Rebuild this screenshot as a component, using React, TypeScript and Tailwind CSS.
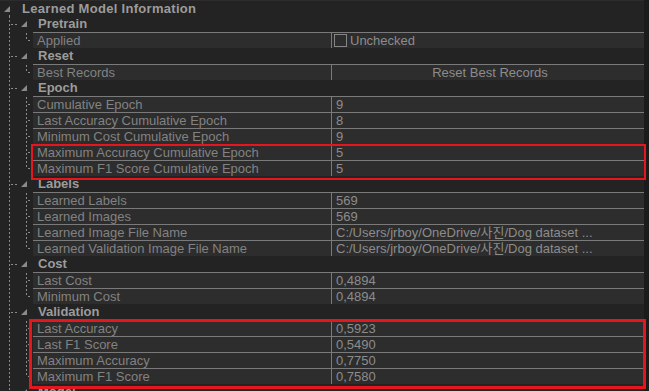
import type { ReactNode } from "react";

type Item = { label: string; value: ReactNode };
type Section = { title: string; items: Item[] };

const FONT = { fontFamily: '"Liberation Sans", "Noto Sans CJK KR", sans-serif' };

function Checkbox() {
  return (
    <span className="flex items-center gap-[3px]">
      <span className="ml-[-2px] h-[13px] w-[13px] border border-[#858585]" />
      <span>Unchecked</span>
    </span>
  );
}

const SECTIONS: Section[] = [
  { title: "Pretrain", items: [{ label: "Applied", value: <Checkbox /> }] },
  {
    title: "Reset",
    items: [
      {
        label: "Best Records",
        value: <span className="block w-full text-center">Reset Best Records</span>,
      },
    ],
  },
  {
    title: "Epoch",
    items: [
      { label: "Cumulative Epoch", value: "9" },
      { label: "Last Accuracy Cumulative Epoch", value: "8" },
      { label: "Minimum Cost Cumulative Epoch", value: "9" },
      { label: "Maximum Accuracy Cumulative Epoch", value: "5" },
      { label: "Maximum F1 Score Cumulative Epoch", value: "5" },
    ],
  },
  {
    title: "Labels",
    items: [
      { label: "Learned Labels", value: "569" },
      { label: "Learned Images", value: "569" },
      { label: "Learned Image File Name", value: "C:/Users/jrboy/OneDrive/사진/Dog dataset ..." },
      {
        label: "Learned Validation Image File Name",
        value: "C:/Users/jrboy/OneDrive/사진/Dog dataset ...",
      },
    ],
  },
  {
    title: "Cost",
    items: [
      { label: "Last Cost", value: "0,4894" },
      { label: "Minimum Cost", value: "0,4894" },
    ],
  },
  {
    title: "Validation",
    items: [
      { label: "Last Accuracy", value: "0,5923" },
      { label: "Last F1 Score", value: "0,5490" },
      { label: "Maximum Accuracy", value: "0,7750" },
      { label: "Maximum F1 Score", value: "0,7580" },
    ],
  },
  { title: "Model", items: [] },
];

// tree connector drawn in the 33px left gutter of each row
function Gutter({ kind, last }: { kind: "top" | "header" | "item"; last?: boolean }) {
  const c = "#8a8a8a";
  return (
    <svg width="33" height="16" className="shrink-0">
      {kind === "top" ? (
        <>
          <polygon points="10,5 10,11 4,11" fill={c} />
          <line x1="9.5" y1="14" x2="9.5" y2="16" stroke={c} strokeDasharray="2 2" />
        </>
      ) : (
        <line x1="9.5" y1="0" x2="9.5" y2="16" stroke={c} strokeDasharray="2 2" />
      )}
      {kind === "header" && (
        <>
          <line x1="11" y1="8.5" x2="17" y2="8.5" stroke={c} strokeDasharray="2 2" />
          <polygon points="27,5 27,11 21,11" fill={c} />
        </>
      )}
      {kind === "item" && (
        <>
          <line x1="26.5" y1="1" x2="26.5" y2={last ? 9 : 16} stroke={c} strokeDasharray="2 2" />
          <line x1="28" y1="8.5" x2="32" y2="8.5" stroke={c} strokeDasharray="2 2" />
        </>
      )}
    </svg>
  );
}

function ItemRow({ item, last }: { item: Item; last: boolean }) {
  return (
    <div className="flex h-4">
      <Gutter kind="item" last={last} />
      <div className="flex flex-1 border-t border-[#7a7a7a] bg-[#2d2d2d] text-[13px] leading-[15px]">
        <div className="w-[298px] shrink-0 overflow-hidden whitespace-nowrap pl-1 text-[#828282]">
          {item.label}
        </div>
        <div className="flex flex-1 overflow-hidden whitespace-nowrap border-l border-[#7a7a7a] pl-1 text-[#8c8c8c]">
          {item.value}
        </div>
      </div>
    </div>
  );
}

export default function App() {
  return (
    <div className="relative flex h-[391px] w-[649px] overflow-hidden bg-[#232323]" style={FONT}>
      <div className="w-[644px] shrink-0 border-t border-[#2c2c2c]">
        <div className="flex h-[15px]">
          <div className="w-[22px]">
            <Gutter kind="top" />
          </div>
          <div className="text-[13px] font-bold leading-[15px] tracking-[0.3px] text-[#9c9c9c]">
            Learned Model Information
          </div>
        </div>
        {SECTIONS.map((s) => (
          <div key={s.title}>
            <div className="flex h-4">
              <Gutter kind="header" />
              <div className="pl-[5px] text-[13px] font-bold leading-[16px] text-[#9c9c9c]">{s.title}</div>
            </div>
            {s.items.map((it, i) => (
              <ItemRow key={it.label} item={it} last={i === s.items.length - 1} />
            ))}
          </div>
        ))}
      </div>
      <div className="flex-1 bg-[#1b1b1b]" />

      {/* red annotation boxes */}
      <div className="pointer-events-none absolute left-[31px] top-[144px] h-[36px] w-[615px] border-2 border-[#e5161d]" />
      <div className="pointer-events-none absolute left-[29px] top-[319px] h-[70px] w-[617px] border-[3px] border-[#e5161d]" />
    </div>
  );
}
